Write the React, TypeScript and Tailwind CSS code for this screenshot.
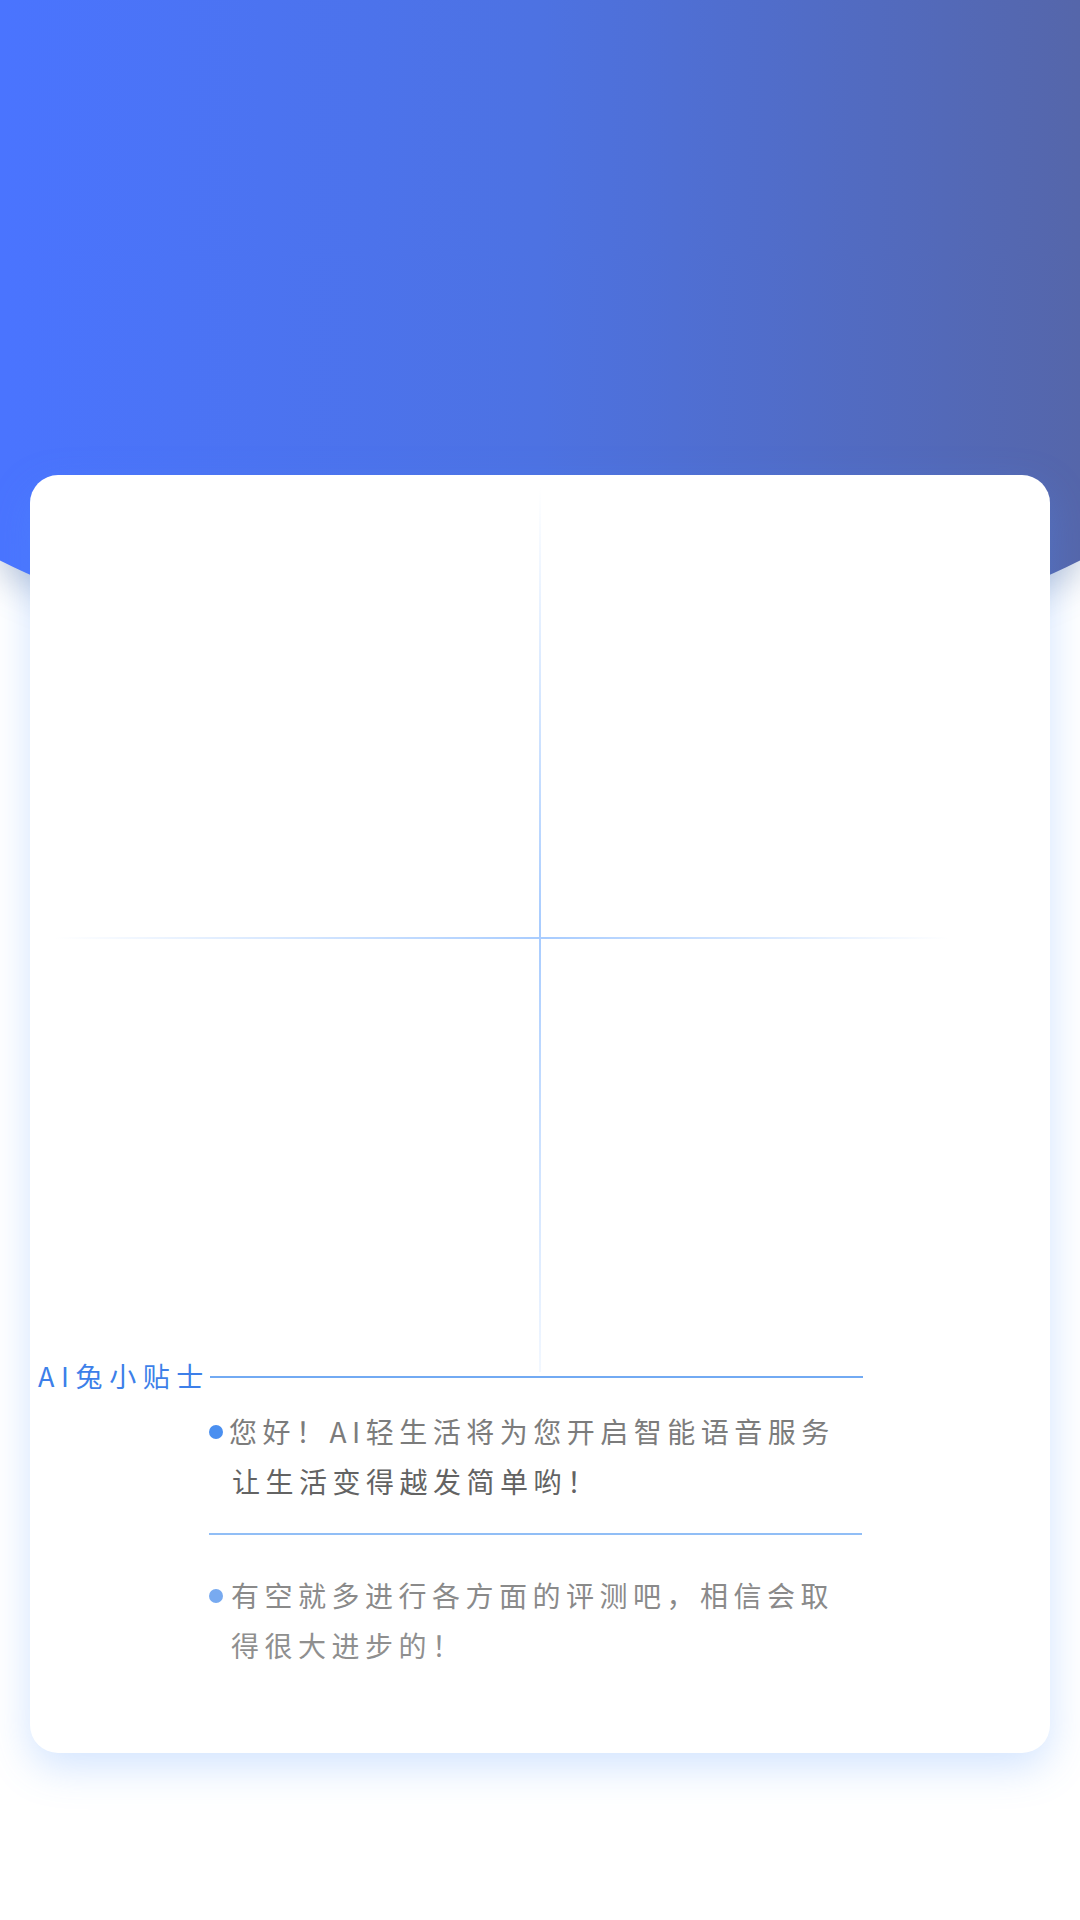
const font = { fontFamily: '"Noto Sans CJK SC", "Noto Sans", sans-serif' };

const tips = [
  {
    dot: "bg-[#4a8ff0]",
    lines: [
      { text: "您好！AI轻生活将为您开启智能语音服务", cls: "text-[#7c7c7c]" },
      { text: "让生活变得越发简单哟！", cls: "text-[#636363] pl-[3px]" },
    ],
  },
  {
    dot: "bg-[#78aaf0]",
    lines: [
      { text: "有空就多进行各方面的评测吧，相信会取", cls: "text-[#8a8a8a] pl-[2px]" },
      { text: "得很大进步的！", cls: "text-[#8f8f8f] pl-[2px]" },
    ],
  },
];

export default function App() {
  return (
    <div className="relative w-[1080px] h-[1920px] bg-white overflow-hidden" style={font}>
      {/* Header background */}
      <div className="absolute top-0 left-0 w-[1080px] h-[700px] [filter:drop-shadow(0_10px_18px_rgba(60,90,140,0.35))]">
        <div className="w-full h-[676px] bg-[linear-gradient(90deg,#4a74ff_0%,#4d72e2_50%,#5566aa_100%)] [clip-path:ellipse(810px_454px_at_50%_222px)]" />
      </div>

      {/* Card */}
      <div className="relative mt-[475px] mx-[30px] h-[1278px] bg-white rounded-[28px] shadow-[0_14px_40px_rgba(80,150,255,0.26)]">
        {/* Cross */}
        <div className="relative h-[885px]">
          <div className="absolute left-[509px] top-[12px] w-[2px] h-[885px] bg-[linear-gradient(180deg,rgba(168,204,255,0)_0%,#a8ccff_50%,rgba(168,204,255,0.15)_100%)]" />
          <div className="absolute left-[25px] top-[462px] w-[893px] h-[2px] bg-[linear-gradient(90deg,rgba(168,204,255,0)_0%,#a8ccff_55%,rgba(168,204,255,0)_100%)]" />
        </div>

        {/* Tips title */}
        <div className="flex items-center h-[34px] pl-[8px]">
          <span className="text-[27px] leading-none tracking-[6.6px] text-[#3d7fe9] pb-[4px]">AI兔小贴士</span>
          <div className="w-[653px] h-[2px] bg-[#72aaf3]" />
        </div>

        {/* Tips */}
        <div className="pl-[179px] pt-[12px]">
          {tips.map((tip, i) => (
            <div key={i}>
              {i > 0 && <div className="w-[653px] h-[2px] bg-[#91bef6] mt-[27px] mb-[35px]" />}
              <div className="flex items-start">
                <div className={`w-[14px] h-[14px] rounded-full mt-[19px] mr-[6px] shrink-0 ${tip.dot}`} />
                <div className="text-[28px] leading-[50px] tracking-[5.5px] whitespace-nowrap">
                  {tip.lines.map((l, j) => (
                    <div key={j} className={l.cls}>
                      {l.text}
                    </div>
                  ))}
                </div>
              </div>
            </div>
          ))}
        </div>
      </div>
    </div>
  );
}
